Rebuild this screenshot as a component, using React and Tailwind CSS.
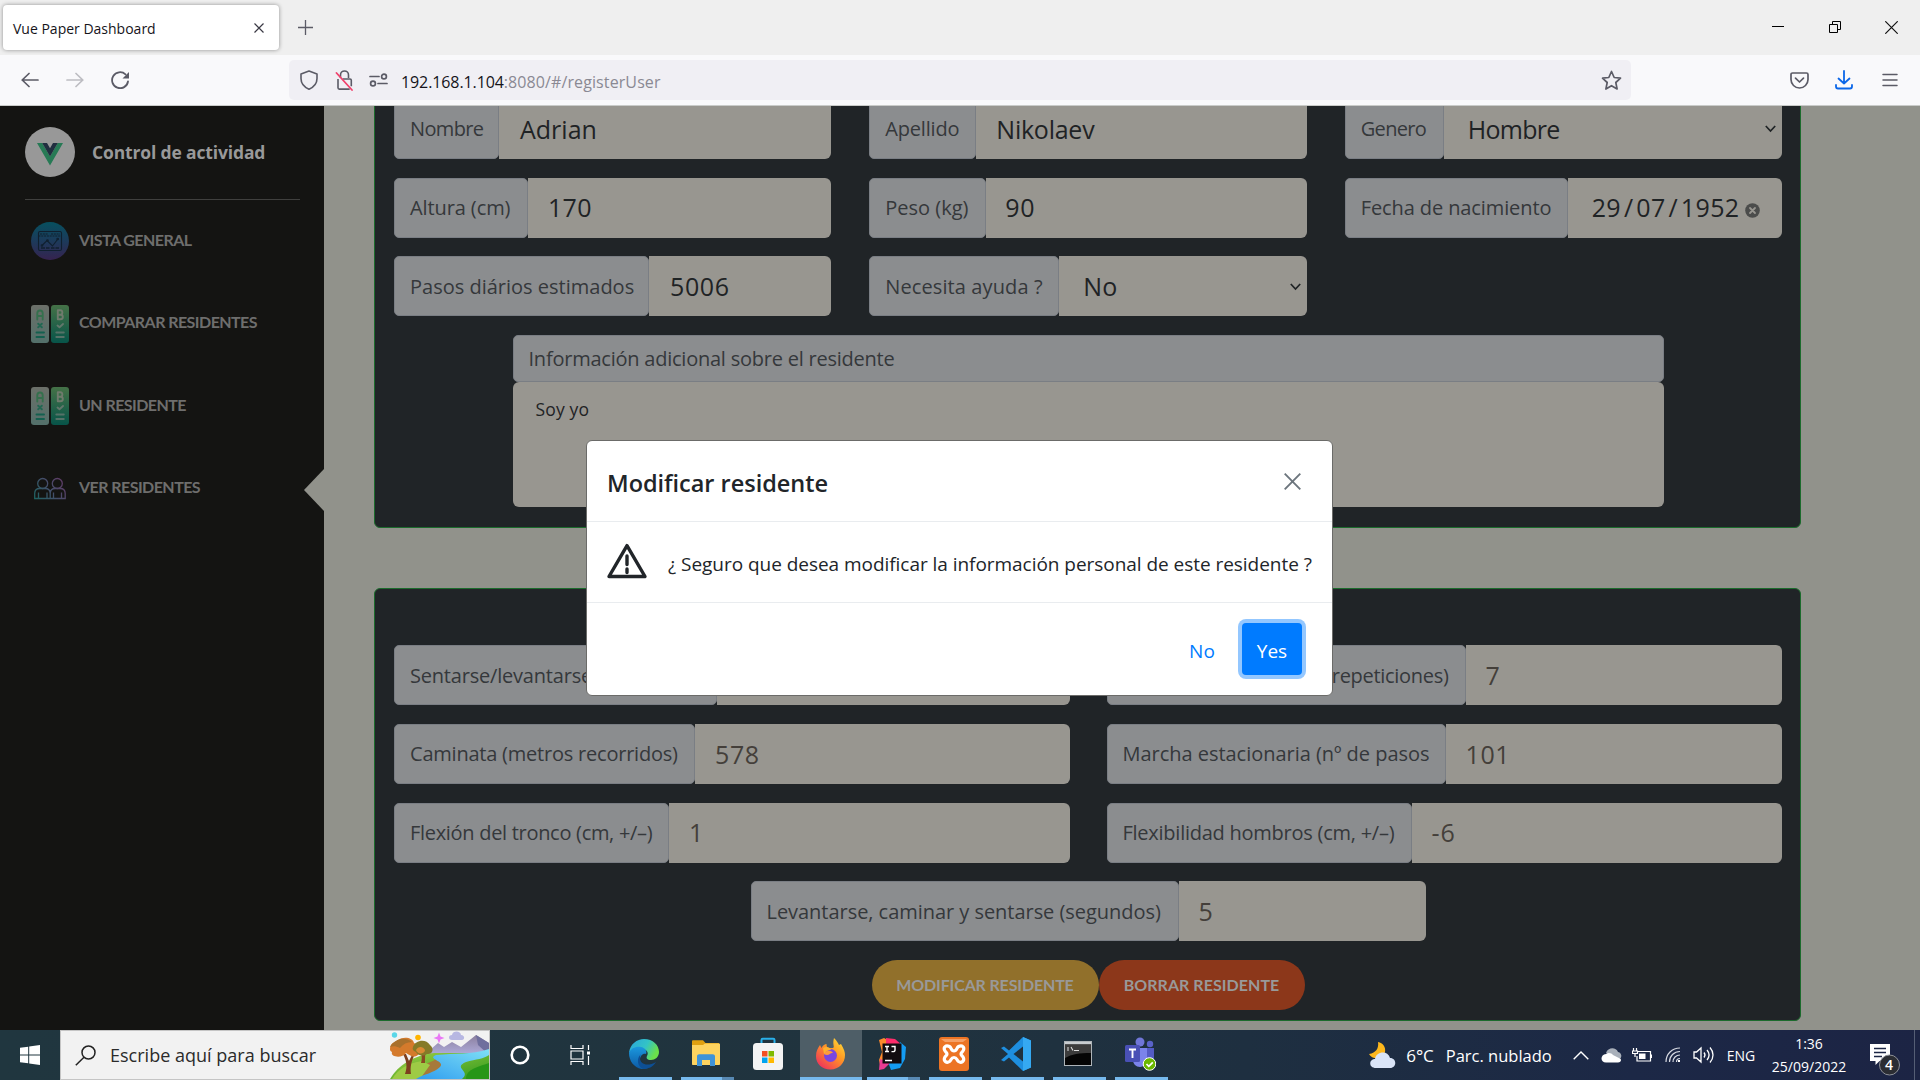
import React from "react";

const personalRows = [
  [
    { label: "Nombre", w: "w-[105px]", ls: "tracking-[-0.65px]", value: "Adrian", pad: "pl-[21px]" },
    { label: "Apellido", w: "w-[107px]", ls: "tracking-[-0.2px]", value: "Nikolaev", pad: "pl-[20px]", vls: "tracking-[-0.25px]" },
    { label: "Genero", w: "w-[99px]", ls: "tracking-[-0.65px]", value: "Hombre", pad: "pl-[24px]", vls: "tracking-[-0.7px]", select: true },
  ],
  [
    { label: "Altura (cm)", w: "w-[134px]", ls: "tracking-[-0.1px]", value: "170", pad: "pl-[20px]", vls: "tracking-[0.3px]" },
    { label: "Peso (kg)", w: "w-[117px]", ls: "tracking-[0px]", value: "90", pad: "pl-[19px]", vls: "tracking-[0.7px]" },
    { label: "Fecha de nacimiento", w: "w-[223px]", ls: "tracking-[-0.1px]", date: ["29", "07", "1952"], pad: "pl-[24px]" },
  ],
  [
    { label: "Pasos diários estimados", w: "w-[255px]", ls: "tracking-[0px]", value: "5006", pad: "pl-[21px]", vls: "tracking-[0.6px]" },
    { label: "Necesita ayuda ?", w: "w-[190px]", ls: "tracking-[0.1px]", value: "No", pad: "pl-[24px]", select: true },
    null,
  ],
];

const testRows = [
  [
    { label: "Sentarse/levantarse (segundos)", w: "w-[323px]", ls: "tracking-[-0.2px]", value: "13", pad: "pl-[20px]" },
    { label: "Flexiones de brazos (repeticiones)", w: "w-[359px]", ls: "tracking-[-0.3px]", value: "7", pad: "pl-[20px]", right: true },
  ],
  [
    { label: "Caminata (metros recorridos)", w: "w-[301px]", ls: "tracking-[-0.22px]", value: "578", pad: "pl-[20px]", vls: "tracking-[0.6px]" },
    { label: "Marcha estacionaria (nº de pasos", w: "w-[339px]", ls: "tracking-[-0.03px]", value: "101", pad: "pl-[20px]", vls: "tracking-[0.6px]" },
  ],
  [
    { label: "Flexión del tronco (cm, +/–)", w: "w-[275px]", ls: "tracking-[-0.3px]", value: "1", pad: "pl-[20px]" },
    { label: "Flexibilidad hombros (cm, +/–)", w: "w-[305px]", ls: "tracking-[-0.25px]", value: "-6", pad: "pl-[20px]", vls: "tracking-[1px]" },
  ],
];

function ClearIcon() {
  return (
    <svg width="15" height="15" viewBox="0 0 15 15" className="mt-[5px] ml-[5px]">
      <circle cx="7.5" cy="7.5" r="7.3" fill="#4b4c4b" />
      <path d="M5 5l5 5M10 5l-5 5" stroke="#989690" strokeWidth="1.8" strokeLinecap="round" />
    </svg>
  );
}

function Field({ f, className = "", tone = "text-[#1f2325]" }) {
  if (!f) return <div className={className} />;
  return (
    <div className={`flex h-[60px] min-w-0 ${className}`}>
      <div className={`flex shrink-0 items-center rounded-[5px] border border-[#7a7e84] bg-[#8b8d8f] pt-[1px] pl-[15px] text-[20px] whitespace-nowrap text-[#35383b] ${f.right ? "justify-end pr-[16px]" : ""} ${f.w} ${f.ls}`}>
        {f.label}
      </div>
      <div className={`flex min-w-0 flex-1 items-center rounded-r-[6px] bg-[#989690] pt-[1px] text-[25px] ${tone} ${f.pad} ${f.vls || ""}`}>
        {f.date ? (
          <>
            <span className="tracking-[0.4px]">{f.date[0]}</span>
            <span className="px-[3px]">/</span>
            <span className="tracking-[0.4px]">{f.date[1]}</span>
            <span className="px-[3px]">/</span>
            <span className="tracking-[0.4px]">{f.date[2]}</span>
            <ClearIcon />
          </>
        ) : (
          f.value
        )}
        {f.select && (
          <svg width="11" height="8" viewBox="0 0 11 8" className="mr-[6px] ml-auto" fill="none" stroke="#1f2325" strokeWidth="1.7">
            <path d="M.8 1l4.7 5L10.2 1" />
          </svg>
        )}
      </div>
    </div>
  );
}

function TopBar() {
  return (
    <header className="h-[106px] shrink-0 border-b border-[#c9cbc9] bg-[#f9f9fb] font-['Open_Sans',sans-serif]">
      <div className="flex h-[55px] bg-[#efefef] pt-[5px] pl-[3px]">
        <div className="flex h-[45px] w-[276px] items-center justify-between rounded-[4px] bg-white pr-[15px] pl-[10px] shadow-[0_0_4px_rgba(0,0,0,0.4)]">
          <span className="pt-[2px] text-[14px] text-[#15141a]">Vue Paper Dashboard</span>
          <svg width="10" height="10" viewBox="0 0 10 10" stroke="#3a3944" strokeWidth="1.2"><path d="M.5.5l9 9M9.5.5l-9 9" /></svg>
        </div>
        <svg width="15" height="15" viewBox="0 0 15 15" className="mt-[15px] ml-[19px]" stroke="#5b5b66" strokeWidth="1.3"><path d="M7.5 0v15M0 7.5h15" /></svg>
        <svg width="12" height="12" viewBox="0 0 12 12" className="mt-[15px] ml-auto" stroke="#000" strokeWidth="1"><path d="M0 6.5h12" /></svg>
        <svg width="12" height="12" viewBox="0 0 12 12" className="mt-[16px] ml-[45px]" fill="none" stroke="#000" strokeWidth="1"><path d="M.5 3.5h8v8h-8zM3.5 3.500V.5h8v8h-3" /></svg>
        <svg width="13" height="13" viewBox="0 0 13 13" className="mt-[16px] mr-[22px] ml-[44px]" stroke="#111" strokeWidth="1.2"><path d="M.3.3l12.400 12.400M12.700.3L.3 12.700" /></svg>
      </div>
      <div className="flex h-[50px] items-center">
        <svg width="18" height="16" viewBox="0 0 18 16" className="ml-[21px]" fill="none" stroke="#5b5b66" strokeWidth="1.7" strokeLinecap="round" strokeLinejoin="round"><path d="M8 1.500L1.200 8 8 14.500M1.200 8H17" /></svg>
        <svg width="18" height="16" viewBox="0 0 18 16" className="ml-[27px]" fill="none" stroke="#bdbdc2" strokeWidth="1.700" strokeLinecap="round" strokeLinejoin="round"><path d="M10 1.500L16.800 8 10 14.500M16.800 8H1" /></svg>
        <svg width="19" height="18" viewBox="0 0 19 18" className="ml-[27px]" fill="none" stroke="#5b5b66" strokeWidth="1.800" strokeLinecap="round"><path d="M17 10.500A8 8 0 1 1 14.500 3.300" /><path d="M18 1v6.500h-6.500z" fill="#5b5b66" stroke="none" /></svg>
        <div className="ml-[159px] flex h-[40px] w-[1342px] items-center rounded-[5px] bg-[#f0eff4] pr-[9px] pl-[11px]">
          <svg width="18" height="20" viewBox="0 0 18 20" fill="none" stroke="#5b5b66" strokeWidth="1.600" strokeLinejoin="round"><path d="M9 1l8 3v4.500c0 5-3 8.500-8 10.700-5-2.200-8-5.700-8-10.700V4z" /></svg>
          <svg width="18" height="21" viewBox="0 0 18 21" className="ml-[17px]" fill="none" strokeWidth="1.600"><path d="M5.500 8V5a4 4 0 0 1 8 0v3M3 9v8.800c0 .8.500 1.300 1.300 1.300h10.400M7.500 9H15c.8 0 1.300.5 1.300 1.300v6" stroke="#5b5b66" /><path d="M1.500 3l15.500 17" stroke="#f1416c" strokeWidth="1.800" strokeLinecap="round" /></svg>
          <svg width="19" height="14" viewBox="0 0 19 14" className="ml-[16px]" fill="none" stroke="#5b5b66" strokeWidth="1.700"><path d="M1 3.500h9M9 10.500h9" strokeLinecap="round" /><circle cx="15" cy="3.500" r="2.400" /><circle cx="4" cy="10.500" r="2.400" /></svg>
          <span className="ml-[13px] pt-[3px] text-[16px] tracking-[-0.1px] text-[#15141a]">192.168.1.104</span>
          <span className="pt-[3px] text-[16px] tracking-[0.1px] text-[#8a8993]">:8080/#/registerUser</span>
          <svg width="21" height="21" viewBox="0 0 21 21" className="ml-auto" fill="none" stroke="#5b5b66" strokeWidth="1.700" strokeLinejoin="round"><path d="M10.500 1.500l2.700 6 6.300.7-4.700 4.300 1.300 6.500-5.600-3.300L4.900 19l1.300-6.500L1.500 8.200l6.300-.7z" /></svg>
        </div>
        <svg width="19" height="17" viewBox="0 0 19 17" className="ml-[159px]" fill="none" stroke="#5b5b66" strokeWidth="1.700" strokeLinecap="round" strokeLinejoin="round"><path d="M2.500 1h14c.9 0 1.500.6 1.500 1.500V7.500a8.500 8.500 0 0 1-17 0V2.500C1 1.600 1.600 1 2.500 1zM5.500 6.200l4 3.800 4-3.800" /></svg>
        <svg width="18" height="20" viewBox="0 0 18 20" className="ml-[26px]" fill="none" stroke="#0a66e8" strokeWidth="1.800" strokeLinecap="round" strokeLinejoin="round"><path d="M9 1v12.500M3.500 8.500L9 13.500l5.500-5M1 15v1.500c0 1.200.8 2 2 2h12c1.200 0 2-.8 2-2V15" /></svg>
        <svg width="16" height="14" viewBox="0 0 16 14" className="ml-[29px]" stroke="#5b5b66" strokeWidth="1.500" strokeLinecap="round"><path d="M1 1.500h14M1 7h14M1 12.500h14" /></svg>
      </div>
    </header>
  );
}

function OverviewIcon() {
  return (
    <svg width="38" height="38" viewBox="0 0 38 38">
      <defs><linearGradient id="ov" x1="0" y1="0" x2="0" y2="1"><stop offset="0" stopColor="#07505f" /><stop offset=".5" stopColor="#1c3a5a" /><stop offset="1" stopColor="#35234f" /></linearGradient></defs>
      <circle cx="19" cy="19" r="19" fill="url(#ov)" />
      <g fill="none" stroke="#10202f" strokeWidth="1.100">
        <rect x="7.500" y="9.500" width="23" height="19" rx="1.500" />
        <path d="M7.500 14h23M9 12h8M20 12h9" strokeDasharray="2 .8" />
        <path d="M11 23.500l5-5 5.500 5.500 5-6.500" />
        <path d="M10 26h4M15 26h3.500M20 26h3.500M24.500 26H28" strokeWidth="1.600" />
        <circle cx="11" cy="23.500" r=".8" /><circle cx="16.500" cy="18.500" r=".8" /><circle cx="26.700" cy="17" r=".8" />
      </g>
    </svg>
  );
}

function CompareIcon() {
  return (
    <svg width="38" height="38" viewBox="0 0 38 38">
      <defs>
        <linearGradient id="ca" x1="0" y1="0" x2="0" y2="1"><stop offset="0" stopColor="#6c7069" /><stop offset="1" stopColor="#53706a" /></linearGradient>
        <linearGradient id="cb" x1="0" y1="0" x2="0" y2="1"><stop offset="0" stopColor="#457247" /><stop offset="1" stopColor="#075449" /></linearGradient>
      </defs>
      <rect width="18" height="38" rx="3" fill="url(#ca)" />
      <rect x="20" width="18" height="38" rx="3" fill="url(#cb)" />
      <g fill="none" strokeWidth="1.900" strokeLinecap="round" strokeLinejoin="round">
        <path d="M6.300 14.500V8.300C6.300 4.500 11.700 4.500 11.700 8.300v6.200M6.300 11h5.400" stroke="#35704d" />
        <path d="M7.200 18.800l3.600 3.400M10.800 18.800l-3.600 3.400" stroke="#226752" strokeWidth="2" />
        <path d="M5.500 27.500h7.500M5.500 32h7.500" stroke="#14604f" />
        <path d="M26.800 5.200v9h2.600c3.200 0 3.200-4.500 0-4.500 2.600 0 2.600-4.500 0-4.500zM26.800 9.700h2.600" stroke="#707b6d" />
        <path d="M26.500 20.500l2 1.700 3.500-3.200" stroke="#62776b" />
        <path d="M25.300 27.500h7.500M25.300 32h7.500" stroke="#567268" />
      </g>
    </svg>
  );
}

function PeopleIcon() {
  return (
    <svg width="38" height="38" viewBox="0 0 38 38" fill="none" stroke="url(#pp)" strokeWidth="1.300">
      <defs><linearGradient id="pp" gradientUnits="userSpaceOnUse" x1="3" y1="30" x2="33" y2="8"><stop offset="0" stopColor="#1b6460" /><stop offset=".5" stopColor="#42506a" /><stop offset="1" stopColor="#643866" /></linearGradient></defs>
      <circle cx="11.700" cy="13.500" r="5" /><circle cx="26.300" cy="13.500" r="5" />
      <path d="M3.700 28.500v-5c0-3 2-5 5-5h5.500c3 0 5 2 5 5v5zM19.200 28.500v-5c0-3 2-5 5-5h5c3 0 5 2 5 5v5zM7.500 28.500v-6M16 28.500v-6M22.500 28.500v-6M30.500 28.500v-6" />
    </svg>
  );
}

const nav = [
  { text: "VISTA GENERAL", Icon: OverviewIcon },
  { text: "COMPARAR RESIDENTES", Icon: CompareIcon },
  { text: "UN RESIDENTE", Icon: CompareIcon },
  { text: "VER RESIDENTES", Icon: PeopleIcon, active: true },
];

function Sidebar() {
  return (
    <aside className="w-[324px] shrink-0 bg-[#141412]">
      <div className="mr-[24px] ml-[25px] flex h-[94px] items-center border-b border-[#40403e] pb-[1px]">
        <div className="flex h-[50px] w-[50px] items-center justify-center rounded-full bg-[#989898]">
          <svg width="26" height="23" viewBox="0 0 26 23" className="mt-[5px]"><path d="M0 0h5.200L13 13.400 20.800 0H26L13 22.500z" fill="#277a55" /><path d="M5.200 0H10l3 5.200L16 0h4.800L13 13.400z" fill="#202e3f" /></svg>
        </div>
        <span className="mt-[1px] ml-[17px] text-[17.500px] font-bold tracking-[-0.150px] text-[#999]">Control de actividad</span>
      </div>
      <nav className="flex flex-col pt-[22px]">
        {nav.map(({ text, Icon, active }, i) => (
          <div key={i} className="relative mb-[44.500px] flex h-[38px] items-center pl-[31px]">
            <Icon />
            <span className="mb-[3px] ml-[10px] font-['Lato',sans-serif] text-[16px] font-bold tracking-[-0.550px] text-[#6e6e6d]">{text}</span>
            {active && <svg width="20" height="42" viewBox="0 0 20 42" className="absolute -top-px right-0"><path d="M20 0v42L0 21z" fill="#91928b" /></svg>}
          </div>
        ))}
      </nav>
    </aside>
  );
}

function Forms() {
  return (
    <main className="min-w-0 flex-1 overflow-hidden bg-[#91928b] pl-[50px]">
      <section className="-mt-[27px] flex h-[449px] w-[1427px] flex-col gap-[18.750px] rounded-[6px] border border-[#1b6b2c] bg-[#202427] pt-[18.750px] pr-[18px] pl-[19px]">
        {personalRows.map((row, i) => (
          <div key={i} className="grid grid-cols-3 gap-x-[38px]">
            {row.map((f, j) => <Field key={j} f={f} />)}
          </div>
        ))}
        <div className="mx-auto w-[1151px]">
          <div className="flex h-[47px] items-center rounded-[5px] border border-[#7a7e84] bg-[#8b8d8f] pt-[1px] pl-[15px] text-[20px] tracking-[-0.230px] text-[#35383b]">Información adicional sobre el residente</div>
          <div className="h-[125px] rounded-[6px] bg-[#989690] px-[23px] pt-[14px] text-[17.500px] tracking-[0.150px] text-[#1f2325]">Soy yo</div>
        </div>
      </section>
      <section className="mt-[60px] flex h-[433px] w-[1427px] flex-col gap-[18.750px] rounded-[6px] border border-[#1b6b2c] bg-[#202427] pt-[56px] pr-[18px] pl-[19px]">
        {testRows.map((row, i) => (
          <div key={i} className="grid grid-cols-2 gap-x-[37px]">
            {row.map((f, j) => <Field key={j} f={f} tone="text-[#443f3a]" />)}
          </div>
        ))}
        <Field
          f={{ label: "Levantarse, caminar y sentarse (segundos)", w: "w-[428px]", ls: "tracking-[-0.040px]", value: "5", pad: "pl-[20px]" }}
          className="mx-auto w-[675px] shrink-0"
          tone="text-[#443f3a]"
        />
        <div className="flex justify-center font-['Lato',sans-serif] text-[16px] font-bold text-[#999]">
          <button className="h-[50px] w-[227px] rounded-full bg-[#91702b] tracking-[-0.150px]">MODIFICAR RESIDENTE</button>
          <button className="h-[50px] w-[206px] rounded-full bg-[#8c371a] tracking-[0.050px]">BORRAR RESIDENTE</button>
        </div>
      </section>
    </main>
  );
}

function Modal() {
  return (
    <div role="dialog" className="absolute top-[440px] left-[586px] flex h-[256px] w-[747px] flex-col rounded-[6px] border border-[#6b6b69] bg-white font-['Open_Sans',sans-serif] text-[#212529]">
      <div className="flex h-[81px] items-center justify-between border-b border-[#e9ecef] pr-[31px] pl-[20px]">
        <h2 className="mt-[5px] text-[23.500px] font-semibold tracking-[-0.020px]">Modificar residente</h2>
        <svg width="17" height="17" viewBox="0 0 17 17" stroke="#6c757d" strokeWidth="1.900"><path d="M.7.700l15.600 15.600M16.300.700L.7 16.300" /></svg>
      </div>
      <div className="flex h-[81px] items-center border-b border-[#e9ecef] pl-[19px]">
        <svg width="42" height="36" viewBox="0 0 42 36" className="mb-[3px]" fill="none" stroke="#212529" strokeWidth="3.400" strokeLinejoin="round"><path d="M21 2.600L39 33.500H3z" /><path d="M21 13v8.500M21 26v3.500" strokeLinecap="round" /></svg>
        <span className="mt-[5px] ml-[20px] text-[19px] tracking-[-0.040px] whitespace-nowrap">¿ Seguro que desea modificar la información personal de este residente ?</span>
      </div>
      <div className="flex flex-1 items-start justify-end pt-[20px] pr-[30px] text-[19px]">
        <button className="mr-[11px] flex h-[52px] w-[58px] items-center justify-center pt-[4px] tracking-[0.200px] text-[#007bff]">No</button>
        <button className="flex h-[52px] w-[60px] items-center justify-center rounded-[4px] bg-[#007bff] pt-[4px] text-white shadow-[0_0_0_4px_#93c7ff]">Yes</button>
      </div>
    </div>
  );
}

function Landscape() {
  return (
    <svg width="99" height="48" viewBox="0 0 99 48">
      <defs>
        <linearGradient id="riv" x1="1" y1="0" x2="0" y2="1"><stop offset="0" stopColor="#7fe0f5" /><stop offset="1" stopColor="#2f9df0" /></linearGradient>
        <linearGradient id="mt" x1="0" y1="0" x2="0" y2="1"><stop offset="0" stopColor="#8b7f9e" /><stop offset="1" stopColor="#b7b6e8" /></linearGradient>
        <linearGradient id="gr" x1="0" y1="0" x2="1" y2="1"><stop offset="0" stopColor="#a3cf45" /><stop offset="1" stopColor="#2f9a1d" /></linearGradient>
      </defs>
      <path d="M34 24l14-12 6 4 8-5 9 5L86 4l13 8v16H34z" fill="url(#mt)" />
      <path d="M86 4l13 8v12L88 14z" fill="#6f6f9d" />
      <path d="M0 48C8 34 24 24 44 22h55v26z" fill="url(#gr)" />
      <path d="M12 48c10-14 22-12 34-20l12 4-8 16z" fill="#a6793a" />
      <path d="M2 48c6-10 16-16 30-18l8 4-10 14z" fill="#9ecb45" />
      <path d="M99 18C80 24 66 22 46 24c-10 4 10 6 4 12-6 6-16 7-24 12h46c10-8-10-11 4-17 10-3 18-3 23-7z" fill="url(#riv)" />
      <path d="M76 48c0-10 12-12 23-16v16z" fill="#279617" />
      <path d="M15 43c3-8 1-14-2-20h3l3 7 4-8 2 1c-4 8-5 13-4 20z" fill="#7d3f1f" />
      <path d="M31 32c2-6 0-10-2-14l4 4 3-5c-1 6-1 10-1 15z" fill="#8a4a22" />
      <path d="M0 18c0-6 5-7 8-9 6-4 15-2 16 3 5 2 8 8 4 12-5 4-8 0-12-2-4 6-16 4-14-1-2-1-2-2-2-3z" fill="#d47a2c" />
      <path d="M2 13c6-6 14-7 20-2-5 0-9 2-12 6-4-2-7-2-10-1z" fill="#a8702c" />
      <path d="M23 16c2-7 13-9 17-2 5 4 2 10-3 9-4 3-10 1-11-2-3-1-4-3-3-5z" fill="#857a28" />
      <path d="M26 19c2-4 7-4 9 0 0 4-8 5-9 0z" fill="#d98a34" />
      <circle cx="4.500" cy="4" r="2.700" fill="#5ad6e8" /><circle cx="28" cy="6.500" r="2.800" fill="#ffb400" />
      <path d="M49 1.500l1.500 4 4 1.500-4 1.500-1.500 4-1.500-4-4-1.500 4-1.500z" fill="#e978f5" />
      <path d="M62 9c-4 0-4-5 0-5 1-5 9-4 9 0 4 0 4 5 1 5z" fill="#b7b7e2" />
    </svg>
  );
}

function TaskCell({ children, bar = "w-[53px]", active = false, stacked = false }) {
  return (
    <div className={`flex h-[50px] w-[62px] flex-col items-center ${active ? "bg-[#4e5e67]" : ""}`}>
      <div className="flex h-[47px] items-center pr-[2px]">{children}</div>
      <div className={`flex h-[3px] ${bar} bg-[#76b9ed]`}>{stacked && <div className="ml-auto w-[12px] bg-[#5889b3]" />}</div>
    </div>
  );
}

function Taskbar() {
  return (
    <footer className="flex h-[50px] shrink-0 bg-[linear-gradient(90deg,#20363f_0%,#20333e_45%,#1e2f40_65%,#1c2846_85%,#1c2444_100%)] font-['Open_Sans',sans-serif] text-white">
      <div className="flex w-[60px] items-center justify-center">
        <svg width="20" height="20" viewBox="0 0 20 20" fill="#fff"><path d="M0 2.800l8.200-1.100v7.800H0zM9.200 1.500L20 0v9.500H9.200zM0 10.500h8.200v7.800L0 17.200zM9.200 10.500H20V20L9.200 18.500z" /></svg>
      </div>
      <div className="flex w-[430px] items-center border border-[#c5c5c5] bg-[#f2f2f2] pl-[14px]">
        <svg width="21" height="21" viewBox="0 0 21 21" fill="none" stroke="#222" strokeWidth="1.500"><circle cx="13.500" cy="7.500" r="6.500" /><path d="M9 12.300L.8 20.300" /></svg>
        <span className="ml-[14px] text-[18px] tracking-[0.010px] text-[#2b2b2b]">Escribe aquí para buscar</span>
        <div className="ml-auto"><Landscape /></div>
      </div>
      <div className="flex w-[60px] items-center justify-center"><svg width="20" height="20" viewBox="0 0 20 20"><circle cx="10" cy="10" r="8.300" fill="none" stroke="#fff" strokeWidth="2.600" /></svg></div>
      <div className="flex w-[64px] items-center justify-center pr-[3px]">
        <svg width="21" height="20" viewBox="0 0 21 20" fill="none" stroke="#fff" strokeWidth="1.200"><path d="M1 0v3.500h12V0M1 20v-3.500h12V20M1 6h12v8H1zM18.500 0v5M18.500 11v9" /><path d="M17 6.500h3v3h-3z" fill="#fff" stroke="none" /></svg>
      </div>

      <TaskCell>
        <svg width="30" height="30" viewBox="0 0 30 30">
          <defs>
            <linearGradient id="e1" x1="0" y1="0" x2="1" y2=".4"><stop offset="0" stopColor="#2aa5dc" /><stop offset=".6" stopColor="#33c3c6" /><stop offset="1" stopColor="#6be04a" /></linearGradient>
            <linearGradient id="e2" x1="0" y1="0" x2="0" y2="1"><stop offset="0" stopColor="#1b98de" /><stop offset="1" stopColor="#0c59a4" /></linearGradient>
          </defs>
          <path d="M0 14C1 5 8 0 15 0c9 0 15 6 15 13 0 5-4 8-8 8-4 0-5-2-4-4 2-3 0-7-5-7-6 0-11 2-13 4z" fill="url(#e1)" />
          <path d="M0 14c2-5 7-7 12-6 5 1 6 5 5 7-3-1-6 2-6 6 0 5 4 8 8 9C8 32 0 24 0 14z" fill="url(#e2)" />
          <path d="M11 19c0 6 7 9 16 4-3 5-8 7-12 7-5-1-9-9-3-15-1 1-1 3-1 4z" fill="#0d4f94" />
        </svg>
      </TaskCell>
      <TaskCell stacked>
        <svg width="28" height="27" viewBox="0 0 28 27"><path d="M0 1.500C0 .7.500.200 1.200.200H11L13.500 3H27v20H0z" fill="#e0a010" /><path d="M0 5h11l2-1.500h14c.6 0 1 .4 1 1V24c0 .6-.4 1-1 1H1c-.6 0-1-.4-1-1z" fill="#fdd35f" /><path d="M5 26V16.500c0-1.400.9-2.300 2.300-2.300h13.400c1.400 0 2.300.9 2.300 2.300V26h-5v-6h-8v6z" fill="#3f93d8" /></svg>
      </TaskCell>
      <TaskCell bar="w-0">
        <svg width="30" height="34" viewBox="0 0 30 34"><path d="M8.500 8V3c0-.8.400-1.200 1.200-1.200h10.600c.8 0 1.200.4 1.200 1.200v5" fill="none" stroke="#29b0ea" strokeWidth="2" /><rect y="6" width="30" height="27" rx="3.500" fill="#f3f3f3" /><path d="M9 14h5.500v5.500H9z" fill="#f25022" /><path d="M15.500 14H21v5.500h-5.500z" fill="#7fba00" /><path d="M9 20.500h5.500V26H9z" fill="#00a4ef" /><path d="M15.500 20.500H21V26h-5.500z" fill="#ffb900" /></svg>
      </TaskCell>
      <TaskCell active bar="w-full">
        <svg width="29" height="32" viewBox="0 0 29 32">
          <defs><linearGradient id="ff" x1="1" y1="0" x2=".2" y2="1"><stop offset="0" stopColor="#ffe83e" /><stop offset=".45" stopColor="#ff9a23" /><stop offset="1" stopColor="#f0305d" /></linearGradient></defs>
          <path d="M18 0c3 3 4 5 5 7l2-1c3 5 4 8 4 11 0 8-6 14.500-14.500 14.500S0 26 0 18c0-5 2-8 4-11l1.500 3C7 7 9 6 10.500 6c0 3 1 4 3 4 3 0 5 1 4-3-.5-3 0-5 .5-7z" fill="url(#ff)" />
          <circle cx="14.500" cy="17.500" r="6.500" fill="#7a45e0" /><path d="M8 15c3-3 7-3 9 0-3-.5-3 2-6 2-2 0-3-1-3-2z" fill="#ff9a3c" /><path d="M7 10c3-2 7-1 8 2-3 0-5 1-7 4z" fill="#ffb02e" />
        </svg>
      </TaskCell>
      <TaskCell stacked>
        <svg width="29" height="34" viewBox="0 0 29 34">
          <path d="M1 3l5-2 9 5-3 20-9 6-2-9 3-8z" fill="#fc8a2c" /><path d="M8 1l9 1 7 6-4 8H8z" fill="#fe2c6b" /><path d="M22 5l6 5-1 12-5 9-9 2-3-8 10-5z" fill="#149cf3" /><path d="M2 22l10 4-6 6-5 1z" fill="#e93b92" />
          <path d="M4.500 6.500h19v20h-19z" fill="#120c10" />
          <path d="M7 9.500h4M9 9.500v5M7 14.500h4M13.500 9.500h3.500v3.500c0 1-.7 1.600-2 1.600h-1.500" stroke="#fff" strokeWidth="1.400" fill="none" /><path d="M7 23.500h7" stroke="#fff" strokeWidth="1.500" />
        </svg>
      </TaskCell>
      <TaskCell>
        <svg width="30" height="34" viewBox="0 0 30 34"><rect y="0" width="30" height="34" rx="3" fill="#ec7424" /><path d="M2 2h26l-4 3H6z" fill="#f6a066" /><path d="M10.500 9.500c-4-2-6 1-5 3.500.8 2 2.500 2.500 2.500 4s-1.700 2-2.500 4c-1 3 2 5.500 5 3.500 2-1.500 1.500-4 4.500-4s2.500 2.500 4.500 4c3 2 6-.5 5-3.500-.8-2-2.500-2.500-2.500-4s1.700-2 2.500-4c1-2.500-1-5.500-5-3.500-2 1-1.500 4.500-4.500 4.500s-2.500-3.500-4.500-4.500z" fill="none" stroke="#fff" strokeWidth="3.200" /></svg>
      </TaskCell>
      <TaskCell>
        <svg width="30" height="34" viewBox="0 0 30 34"><path d="M22 0l8 3.500v27L22 34 8 20.500l-5 4L0 23l7-6-7-6 3-1.500 5 4z" fill="#1e8fe0" /><path d="M22 0l8 3.500v27L22 34z" fill="#35a9f2" /><path d="M22 9.500V24.500L12.500 17z" fill="#1f313e" /></svg>
      </TaskCell>
      <TaskCell>
        <svg width="28" height="25" viewBox="0 0 28 25"><rect x=".5" y=".5" width="27" height="24" fill="#050505" stroke="#aeb4b8" /><path d="M1 1h26v2.500H1z" fill="#c9cdd0" /><path d="M1 3.500h26V12C15 12 8 13 1 17z" fill="#3c3c3c" /><path d="M3 7h2M3 9h2M7 6l2 3.500M10 9.500h5" stroke="#ddd" strokeWidth="1.100" /></svg>
      </TaskCell>
      <TaskCell>
        <svg width="31" height="34" viewBox="0 0 31 34">
          <circle cx="15" cy="5" r="4.500" fill="#7076d8" /><circle cx="25" cy="7" r="3.200" fill="#5a62c8" />
          <path d="M20 11h9v9c0 4-4 6-8 5z" fill="#545bc4" /><path d="M8 11h14v11c0 4-3 8-7 8-4 0-7-3-7-7z" fill="#7b83eb" /><rect y="8" width="15" height="17" rx="1.500" fill="#4950b5" />
          <path d="M4 12.500h7M7.500 12.500v8.500" stroke="#fff" strokeWidth="1.900" /><circle cx="24.500" cy="27" r="6.300" fill="#6bb700" stroke="#fff" strokeWidth="1" /><path d="M21.500 27l2.300 2.300 4-4" fill="none" stroke="#fff" strokeWidth="1.700" />
        </svg>
      </TaskCell>

      <div className="ml-auto flex items-center">
        <svg width="28" height="27" viewBox="0 0 28 27"><path d="M10 0c1 6-2 11-9 12 3 6 14 6 16-2 1-5-2-9-7-10z" fill="#fdb71c" /><path d="M8 26c-8 0-7-9-1-9 1-8 13-9 15-1 7 0 7 10 0 10z" fill="#d9e4f7" /></svg>
        <span className="ml-[10px] pt-[2px] text-[17px] tracking-[-0.100px]">6°C</span>
        <span className="ml-[12px] pt-[2px] text-[16.500px]">Parc. nublado</span>
        <svg width="16" height="9" viewBox="0 0 16 9" className="ml-[21px]" fill="none" stroke="#fff" strokeWidth="1.400"><path d="M.7 8.300L8 1l7.300 7.300" /></svg>
        <svg width="21" height="15" viewBox="0 0 21 15" className="ml-[12px]"><path d="M5 5C7-1 15-1 17 4c4 1 4 5 2 7z" fill="#a9b0ba" /><path d="M5 14.500c-6 0-6-8 0-8.500 2-2 6-1 7 1l7 3.500c2 1 1 4-2 4z" fill="#fff" /></svg>
        <svg width="20" height="15" viewBox="0 0 20 15" className="ml-[10px]" fill="none" stroke="#fff" strokeWidth="1.200"><path d="M1.500 0v2.500M4.500 0v2.500M.5 3h5v2.500H.5zM3 5.500V9M6 3.500h12.500v9.500H5V8" /><path d="M7 5.500h6.500v5.500H7z" fill="#fff" stroke="none" /><path d="M19.500 6.500v3.500" /></svg>
        <svg width="16" height="16" viewBox="0 0 16 16" className="ml-[13px]" fill="none" stroke="#d7dae2" strokeWidth="1.200"><path d="M1 15C1 7 7 1 15 1M4.500 15C4.500 9 9 4.500 15 4.500M8 15c0-4 3-7 7-7M11.500 15c0-2 1.500-3.500 3.500-3.500" /><path d="M13 13h2v2h-2z" fill="#fff" stroke="none" /></svg>
        <svg width="21" height="18" viewBox="0 0 21 18" className="ml-[12px]" fill="none" stroke="#fff" strokeWidth="1.300"><path d="M1 6v6h2.500L8 16V2L3.500 6zM11 6.500c1.200 1.500 1.200 3.500 0 5M14 4c2.500 3 2.500 7 0 10M17 1.500c4 4.500 4 10.500 0 15" /></svg>
        <span className="ml-[13px] text-[14px] tracking-[-0.100px]">ENG</span>
        <div className="ml-[16px] flex w-[76px] flex-col items-center text-[14px] leading-[23px]"><span>1:36</span><span>25/09/2022</span></div>
        <div className="relative ml-[23px] h-[50px] w-[45px] border-r border-[#555e75]">
          <svg width="31" height="34" viewBox="0 0 31 34" className="absolute top-[14px] left-0"><path d="M0 0h20v17H9.500L5.500 21V17H0z" fill="#fff" /><path d="M4 4.500h12M4 8.500h12M4 12.500h8" stroke="#1c2645" strokeWidth="1.300" /><circle cx="19.500" cy="21" r="10" fill="#2b2d33" stroke="#8d9096" /></svg>
          <span className="absolute top-[25px] left-[15px] text-[14px] leading-[20px] font-semibold">4</span>
        </div>
        <div className="w-[5px]" />
      </div>
    </footer>
  );
}

export default function App() {
  return (
    <div className="relative flex h-[1080px] w-[1920px] flex-col overflow-hidden font-['Open_Sans',sans-serif]">
      <TopBar />
      <div className="flex min-h-0 flex-1">
        <Sidebar />
        <Forms />
      </div>
      <Modal />
      <Taskbar />
    </div>
  );
}
